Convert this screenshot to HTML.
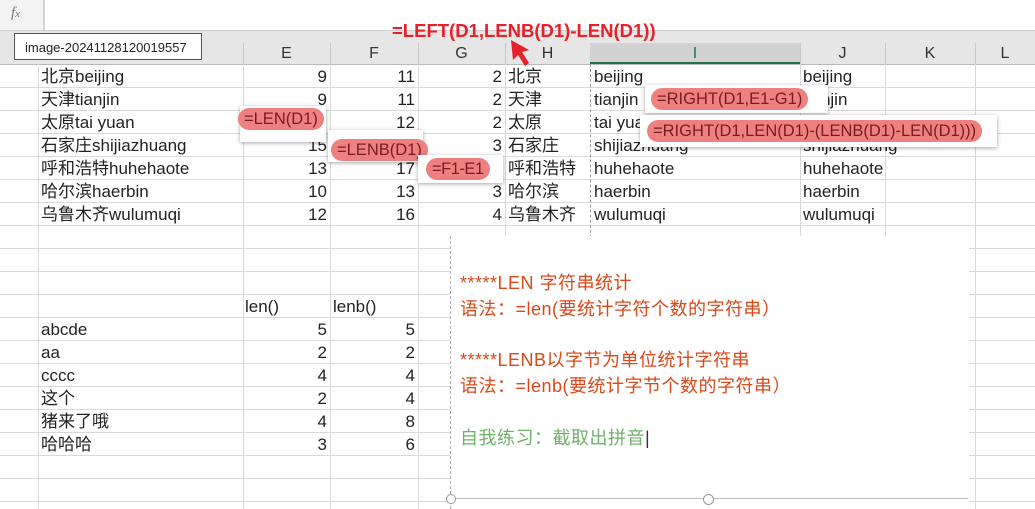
<!DOCTYPE html>
<html><head><meta charset="utf-8"><style>
body{margin:0;width:1035px;height:509px;overflow:hidden;background:#fff;position:relative;font-family:"Liberation Sans","Noto Sans CJK SC",sans-serif;}
.a{position:absolute;}
.hl{position:absolute;left:0;width:1035px;height:1px;background:#d9d9d9;}
.vl{position:absolute;width:1px;background:#d9d9d9;top:64px;height:445px;}
.t{position:absolute;font-size:17px;color:#222;line-height:23px;white-space:nowrap;}
.r{text-align:right;}
.ch{position:absolute;top:43px;height:21px;font-size:16px;color:#333;text-align:center;line-height:21px;}
.pill{position:absolute;background:#fff;box-shadow:0 1px 4px rgba(0,0,0,.35);}
.pill span{position:absolute;background:#ef8080;border-radius:12px;color:#7a1c1c;font-size:16.5px;line-height:22px;padding:0 6px;white-space:nowrap;}
.o{color:#d9481a;font-size:18px;position:absolute;white-space:nowrap;letter-spacing:0.5px;}
</style></head><body>
<div class="a" style="left:0;top:0;width:1035px;height:30px;background:#fff;border-bottom:1px solid #d0d0d0"></div>
<div class="a" style="left:0;top:0;width:43px;height:30px;background:#f3f3f3;border-right:2px solid #d4d4d4"></div>
<div class="a" style="left:11px;top:5px;font-family:'Liberation Serif',serif;font-style:italic;color:#777;font-size:15px">f<span style="font-size:11px">x</span></div>
<div class="a" style="left:0;top:31px;width:1035px;height:33px;background:#e6e6e6;border-bottom:1px solid #b8b8b8"></div>
<div class="a" style="left:590px;top:43px;width:210px;height:19px;background:#d2d2d2;border-bottom:2px solid #217346"></div>
<div class="a" style="left:14px;top:33px;width:188px;height:27px;background:#fff;border:1px solid #555;font-size:13px;line-height:27px;padding-left:10px;box-sizing:border-box;color:#222">image-20241128120019557</div>
<div class="ch" style="left:243px;width:87px">E</div>
<div class="ch" style="left:330px;width:88px">F</div>
<div class="ch" style="left:418px;width:87px">G</div>
<div class="ch" style="left:505px;width:85px">H</div>
<div class="ch" style="left:590px;width:210px;color:#217346">I</div>
<div class="ch" style="left:800px;width:85px">J</div>
<div class="ch" style="left:885px;width:90px">K</div>
<div class="ch" style="left:975px;width:60px">L</div>
<div class="a" style="left:243px;top:43px;width:1px;height:21px;background:#c8c8c8"></div>
<div class="a" style="left:330px;top:43px;width:1px;height:21px;background:#c8c8c8"></div>
<div class="a" style="left:418px;top:43px;width:1px;height:21px;background:#c8c8c8"></div>
<div class="a" style="left:505px;top:43px;width:1px;height:21px;background:#c8c8c8"></div>
<div class="a" style="left:800px;top:43px;width:1px;height:21px;background:#c8c8c8"></div>
<div class="a" style="left:885px;top:43px;width:1px;height:21px;background:#c8c8c8"></div>
<div class="a" style="left:975px;top:43px;width:1px;height:21px;background:#c8c8c8"></div>
<div class="hl" style="top:87px"></div><div class="hl" style="top:110px"></div><div class="hl" style="top:133px"></div><div class="hl" style="top:156px"></div><div class="hl" style="top:179px"></div><div class="hl" style="top:202px"></div><div class="hl" style="top:225px"></div><div class="hl" style="top:248px"></div><div class="hl" style="top:271px"></div><div class="hl" style="top:294px"></div><div class="hl" style="top:317px"></div><div class="hl" style="top:340px"></div><div class="hl" style="top:363px"></div><div class="hl" style="top:386px"></div><div class="hl" style="top:409px"></div><div class="hl" style="top:432px"></div><div class="hl" style="top:455px"></div><div class="hl" style="top:478px"></div><div class="hl" style="top:501px"></div>
<div class="vl" style="left:38px"></div><div class="vl" style="left:243px"></div><div class="vl" style="left:330px"></div><div class="vl" style="left:418px"></div><div class="vl" style="left:505px"></div><div class="vl" style="left:590px;border-left:1px dashed #999;background:none"></div><div class="vl" style="left:800px"></div><div class="vl" style="left:885px"></div><div class="vl" style="left:975px"></div>
<div class="t" style="left:41px;top:65px">北京beijing<br>天津tianjin<br>太原tai yuan<br>石家庄shijiazhuang<br>呼和浩特huhehaote<br>哈尔滨haerbin<br>乌鲁木齐wulumuqi</div>
<div class="t r" style="left:243px;width:84px;top:65px">9<br>9<br>12<br>15<br>13<br>10<br>12</div>
<div class="t r" style="left:330px;width:85px;top:65px">11<br>11<br>12<br>17<br>17<br>13<br>16</div>
<div class="t r" style="left:418px;width:84px;top:65px">2<br>2<br>2<br>3<br>3<br>3<br>4</div>
<div class="t" style="left:508px;top:65px">北京<br>天津<br>太原<br>石家庄<br>呼和浩特<br>哈尔滨<br>乌鲁木齐</div>
<div class="t" style="left:594px;top:65px">beijing<br>tianjin<br>tai yuan<br>shijiazhuang<br>huhehaote<br>haerbin<br>wulumuqi</div>
<div class="t" style="left:803px;top:65px">beijing<br>tianjin<br>tai yuan<br>shijiazhuang<br>huhehaote<br>haerbin<br>wulumuqi</div>
<div class="t" style="left:245px;top:295px">len()</div>
<div class="t" style="left:333px;top:295px">lenb()</div>
<div class="t" style="left:41px;top:318px">abcde<br>aa<br>cccc<br>这个<br>猪来了哦<br>哈哈哈</div>
<div class="t r" style="left:243px;width:84px;top:318px">5<br>2<br>4<br>2<br>4<br>3</div>
<div class="t r" style="left:330px;width:85px;top:318px">5<br>2<br>4<br>4<br>8<br>6</div>
<div class="pill" style="left:240px;top:106px;width:86px;height:36px"><span style="left:-2px;top:2px">=LEN(D1)</span></div>
<div class="pill" style="left:328px;top:130px;width:95px;height:32px"><span style="left:3px;top:9px">=LENB(D1)</span></div>
<div class="pill" style="left:418px;top:155px;width:85px;height:28px"><span style="left:8px;top:3px;letter-spacing:-0.5px">=F1-E1</span></div>
<div class="pill" style="left:645px;top:85px;width:183px;height:28px"><span style="left:6px;top:3px">=RIGHT(D1,E1-G1)</span></div>
<div class="pill" style="left:640px;top:115px;width:357px;height:32px"><span style="left:7px;top:5px">=RIGHT(D1,LEN(D1)-(LENB(D1)-LEN(D1)))</span></div>
<div class="a" style="left:392px;top:20px;color:#e8202a;font-weight:bold;font-size:18.5px;white-space:nowrap">=LEFT(D1,LENB(D1)-LEN(D1))</div>
<svg class="a" style="left:508px;top:38px" width="26" height="32"><path d="M3 2 L5 22 L10 17 L17 28 L21 25 L14 14 L21 12 Z" fill="#e8202a"/></svg>
<div class="a" style="left:450px;top:236px;width:518px;height:273px;background:#fff;border-left:1px dashed #aaa"></div>
<div class="a" style="left:450px;top:498px;width:518px;height:1px;background:#bbb"></div>
<div class="a" style="left:446px;top:494px;width:8px;height:8px;border:1px solid #999;border-radius:50%;background:#fff"></div>
<div class="a" style="left:703px;top:494px;width:9px;height:9px;border:1px solid #999;border-radius:50%;background:#fff"></div>
<div class="o" style="left:460px;top:269px">*****LEN 字符串统计</div>
<div class="o" style="left:460px;top:295px">语法：=len(要统计字符个数的字符串）</div>
<div class="o" style="left:460px;top:346px">*****LENB以字节为单位统计字符串</div>
<div class="o" style="left:460px;top:372px">语法：=lenb(要统计字节个数的字符串）</div>
<div class="o" style="left:460px;top:424px;color:#6fb06a">自我练习：截取出拼音<span style="color:#333">|</span></div>
</body></html>
